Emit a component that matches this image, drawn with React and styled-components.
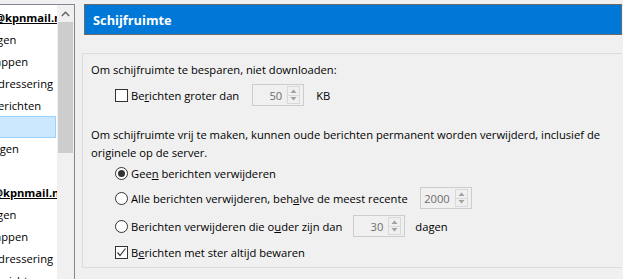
import styled, { createGlobalStyle } from 'styled-components';

const GlobalStyle = createGlobalStyle`
  html, body {
    margin: 0;
    padding: 0;
    background: #f0f0f0;
    overflow: hidden;
  }

  body {
    font-family: 'Open Sans', 'Noto Sans', sans-serif;
    font-size: 11.2px;
    color: #000;
  }
`;

const StyledPage = styled.div`
  width: 623px;
  height: 279px;

  display: flex;
  column-gap: 7px;

  overflow: hidden;
`;

/* ---------- left tree ---------- */

const StyledTree = styled.div`
  width: 74px;
  height: 275px;

  margin-top: 4px;

  display: flex;

  border-top: 1px solid #828790;
  border-right: 1px solid #828790;
  background: #fff;
`;

const StyledTreeBody = styled.div`
  width: 57px;

  padding-top: 2px;

  overflow: hidden;
`;

const StyledTreeInner = styled.div`
  margin-left: -93px;
  width: 240px;
`;

const StyledTreeRow = styled.div`
  height: 21.85px;

  display: flex;
  align-items: center;

  box-sizing: border-box;
  padding-left: ${(p) => p.$indent}px;

  font-weight: ${(p) => (p.$account ? 700 : 400)};
  white-space: nowrap;

  ${(p) =>
    p.$selected &&
    `
    background: #cce8ff;
    border: 1px solid #99d1ff;
    width: 149px;
  `}
`;

const StyledAccountName = styled.span`
  text-decoration: underline;
`;

const StyledScrollbar = styled.div`
  width: 17px;

  display: flex;
  flex-direction: column;

  background: #f0f0f0;
`;

const StyledScrollButton = styled.div`
  height: 17px;

  display: flex;
  justify-content: center;
  align-items: center;
`;

const StyledThumb = styled.div`
  height: 131px;

  margin: 0 1px 0 1px;

  background: #cdcdcd;
`;

/* ---------- right panel ---------- */

const StyledPanel = styled.div`
  flex: 1;

  display: flex;
  flex-direction: column;

  padding-right: 1px;
`;

const StyledHeader = styled.div`
  height: 31px;

  margin-top: 4px;
  margin-left: 2px;

  display: flex;
  align-items: center;

  box-sizing: border-box;
  padding-left: 8px;

  border: 1px solid #6b6b6b;
  background: #0078d7;

  color: #fff;
  font-size: 12.8px;
  font-weight: 700;
`;

const StyledGroup = styled.div`
  height: 215px;

  margin-top: 18px;

  box-sizing: border-box;
  padding: 7px 0 0 8px;

  border: 1px solid #dcdcdc;
  border-right: none;

  display: flex;
  flex-direction: column;
`;

const StyledText = styled.p`
  margin: 0;
  margin-top: ${(p) => p.$top || 0}px;

  line-height: 18px;
`;

const StyledOption = styled.div`
  height: ${(p) => p.$h || 25}px;

  padding-left: 24px;

  display: flex;
  align-items: center;

  white-space: nowrap;
`;

const StyledLabel = styled.span`
  margin-left: 3px;
  margin-right: ${(p) => p.$gap || 0}px;
`;

const StyledBox = styled.span`
  width: 13px;
  height: 13px;

  display: inline-flex;
  justify-content: center;
  align-items: center;

  box-sizing: border-box;

  border: 1px solid #333;
  border-radius: ${(p) => (p.$round ? '50%' : '0')};
  background: #fff;
`;

const StyledDot = styled.span`
  width: 7px;
  height: 7px;

  border-radius: 50%;
  background: #333;
`;

const StyledSpin = styled.div`
  width: 52px;
  height: 22px;

  display: flex;
  align-items: center;
  justify-content: flex-end;

  box-sizing: border-box;
  padding-right: 3px;

  border: 1px solid #cccccc;
  background: #f0f0f0;

  color: #6d6d6d;
`;

const StyledSpinValue = styled.span`
  margin-right: 5px;
`;

const StyledSpinButtons = styled.div`
  width: 13px;
  height: 18px;

  display: flex;
  flex-direction: column;

  box-sizing: border-box;
  border: 1px solid #d9d9d9;
`;

const StyledSpinHalf = styled.div`
  flex: 1;

  display: flex;
  justify-content: center;
  align-items: center;

  & + & {
    border-top: 1px solid #d9d9d9;
  }
`;

const StyledUnit = styled.span`
  margin-left: ${(p) => p.$gap || 12}px;
`;

function Key({ children }) {
  return <u>{children}</u>;
}

function CheckBox({ checked }) {
  return (
    <StyledBox>
      {checked && (
        <svg width='11' height='11' viewBox='0 0 11 11'>
          <polyline
            points='1.5,5.5 4,8.5 9.5,1.5'
            fill='none'
            stroke='#333'
            strokeWidth='1.2'
          />
        </svg>
      )}
    </StyledBox>
  );
}

function Radio({ checked }) {
  return <StyledBox $round>{checked && <StyledDot />}</StyledBox>;
}

function Spin({ value }) {
  return (
    <StyledSpin>
      <StyledSpinValue>{value}</StyledSpinValue>
      <StyledSpinButtons>
        <StyledSpinHalf>
          <svg width='7' height='4' viewBox='0 0 7 4'>
            <polygon points='0.5,4 3.5,0.5 6.5,4' fill='#a0a0a0' />
          </svg>
        </StyledSpinHalf>
        <StyledSpinHalf>
          <svg width='7' height='4' viewBox='0 0 7 4'>
            <polygon points='0.5,0 6.5,0 3.5,3.5' fill='#a0a0a0' />
          </svg>
        </StyledSpinHalf>
      </StyledSpinButtons>
    </StyledSpin>
  );
}

const treeRows = [
  { label: 'hans.devries@kpnmail.nl', account: true, indent: 17 },
  { label: 'Serverinstellingen' },
  { label: 'Kopieën en mappen' },
  { label: 'Opstellen en adressering' },
  { label: 'Ongewenste berichten' },
  { label: 'Schijfruimte', selected: true },
  { label: 'Leesbevestigingen' },
  { label: 'Beveiliging' },
  { label: 'hans.devries@kpnmail.nl', account: true, indent: 15 },
  { label: 'Serverinstellingen' },
  { label: 'Kopieën en mappen' },
  { label: 'Opstellen en adressering' },
  { label: 'Ongewenste berichten' },
];

function App() {
  return (
    <>
      <GlobalStyle />
      <StyledPage>
        <StyledTree>
          <StyledTreeBody>
            <StyledTreeInner>
              {treeRows.map((row, i) => (
                <StyledTreeRow
                  key={i}
                  $account={row.account}
                  $selected={row.selected}
                  $indent={row.indent ?? 16}
                >
                  {row.account ? (
                    <StyledAccountName>{row.label}</StyledAccountName>
                  ) : (
                    row.label
                  )}
                </StyledTreeRow>
              ))}
            </StyledTreeInner>
          </StyledTreeBody>
          <StyledScrollbar>
            <StyledScrollButton>
              <svg width='9' height='6' viewBox='0 0 9 6'>
                <polyline
                  points='0.8,5 4.5,1.3 8.2,5'
                  fill='none'
                  stroke='#606060'
                  strokeWidth='1.4'
                />
              </svg>
            </StyledScrollButton>
            <StyledThumb />
          </StyledScrollbar>
        </StyledTree>

        <StyledPanel>
          <StyledHeader>Schijfruimte</StyledHeader>
          <StyledGroup>
            <StyledText>Om schijfruimte te besparen, niet downloaden:</StyledText>
            <StyledOption $h={32}>
              <CheckBox />
              <StyledLabel $gap={13}>
                Be<Key>r</Key>ichten groter dan
              </StyledLabel>
              <Spin value='50' />
              <StyledUnit>KB</StyledUnit>
            </StyledOption>
            <StyledText $top={15}>
              Om schijfruimte vrij te maken, kunnen oude berichten permanent
              worden verwijderd, inclusief de originele op de server.
            </StyledText>
            <StyledOption $h={22}>
              <Radio checked />
              <StyledLabel>
                Gee<Key>n</Key> berichten verwijderen
              </StyledLabel>
            </StyledOption>
            <StyledOption $h={28}>
              <Radio />
              <StyledLabel $gap={12}>
                Alle berichten verwijderen, beh<Key>a</Key>lve de meest recente
              </StyledLabel>
              <Spin value='2000' />
            </StyledOption>
            <StyledOption $h={28}>
              <Radio />
              <StyledLabel $gap={11}>
                Berichten verwijderen die o<Key>u</Key>der zijn dan
              </StyledLabel>
              <Spin value='30' />
              <StyledUnit $gap={10}>dagen</StyledUnit>
            </StyledOption>
            <StyledOption $h={24}>
              <CheckBox checked />
              <StyledLabel>
                B<Key>e</Key>richten met ster altijd bewaren
              </StyledLabel>
            </StyledOption>
          </StyledGroup>
        </StyledPanel>
      </StyledPage>
    </>
  );
}

export default App;
